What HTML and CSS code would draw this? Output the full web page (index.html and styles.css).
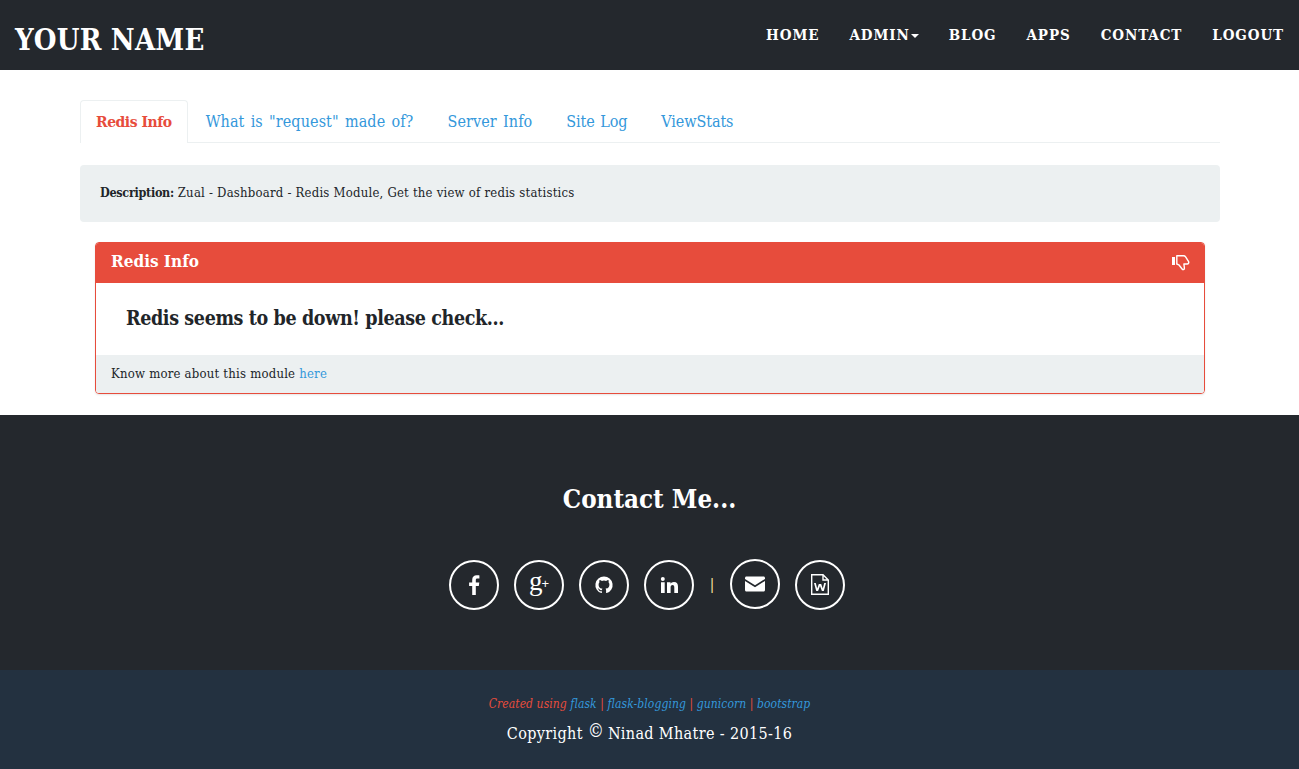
FILE: index.html
```html
<!DOCTYPE html>
<html lang="en">
<head>
    <meta charset="UTF-8">
    <title>Redis Info</title>
    <link rel="stylesheet" href="styles.css">
</head>
<body>

    <nav class="navbar">
        <a class="brand" href="#">YOUR NAME</a>
        <ul class="nav-links">
            <li><a href="#">HOME</a></li>
            <li><a href="#">ADMIN<span class="caret"></span></a></li>
            <li><a href="#">BLOG</a></li>
            <li><a href="#">APPS</a></li>
            <li><a href="#">CONTACT</a></li>
            <li><a href="#">LOGOUT</a></li>
        </ul>
    </nav>

    <main class="content">
        <ul class="tabs">
            <li class="tab active"><a href="#">Redis Info</a></li>
            <li class="tab"><a href="#">What is "request" made of?</a></li>
            <li class="tab"><a href="#">Server Info</a></li>
            <li class="tab short"><a href="#">Site Log</a></li>
            <li class="tab short"><a href="#">ViewStats</a></li>
        </ul>

        <div class="well"><strong>Description:</strong> Zual - Dashboard - Redis Module, Get the view of redis statistics</div>

        <div class="panel">
            <div class="panel-heading">
                <h3>Redis Info</h3>
                <svg class="thumb" viewBox="0 0 18 18" width="18" height="18">
                    <path d="M0 3h3v8H0z" fill="#fff"/>
                    <path d="M4.800 1.800h6.700c1 0 1.600.3 2.100 1l3 4.800c.5.900-.1 2.400-1.300 2.400h-3.400l.5 4.200c.1 1.300-1.500 1.900-2.300.8L6.800 10.800l-2-.8z" fill="none" stroke="#fff" stroke-width="1.400" stroke-linejoin="round"/>
                </svg>
            </div>
            <div class="panel-body">
                <h4>Redis seems to be down! please check...</h4>
            </div>
            <div class="panel-footer">Know more about this module <a href="#">here</a></div>
        </div>
    </main>

    <section class="contact">
        <h2>Contact Me...</h2>
        <div class="social">
            <a class="circle" href="#">
                <svg viewBox="0 0 24 24" width="24" height="24"><path d="M13.800 22v-9h3l.5-3.500h-3.500V7.300c0-1 .3-1.700 1.800-1.700h1.800V2.400c-.3 0-1.400-.1-2.700-.1-2.700 0-4.500 1.600-4.500 4.600v2.600H7.100V13h3.100v9z" fill="#fff"/></svg>
            </a>
            <a class="circle" href="#">
                <span class="gplus">g<span class="plus">+</span></span>
            </a>
            <a class="circle" href="#">
                <svg viewBox="0 0 24 24" width="24" height="24"><path d="M12 3.500a8.500 8.500 0 0 0-2.700 16.600c.4.100.6-.2.600-.4v-1.500c-2.400.5-2.900-1-2.900-1-.4-1-.9-1.300-.9-1.300-.8-.5.100-.5.100-.5.900.1 1.300.9 1.300.9.800 1.300 2 .9 2.400.7.100-.6.300-.9.600-1.200-1.900-.2-3.900-1-3.900-4.200 0-.9.300-1.700.9-2.300-.1-.2-.4-1.100.1-2.300 0 0 .7-.2 2.300.9a8 8 0 0 1 4.200 0c1.600-1.100 2.300-.9 2.300-.9.500 1.200.2 2.100.1 2.300.6.600.9 1.400.9 2.300 0 3.200-2 4-3.900 4.200.3.300.6.800.6 1.600v2.300c0 .2.200.5.600.4A8.500 8.500 0 0 0 12 3.500z" fill="#fff"/></svg>
            </a>
            <a class="circle" href="#">
                <svg viewBox="0 0 24 24" width="24" height="24"><path d="M4 9.200h3.700V20H4zM5.800 4a2 2 0 1 1 0 4 2 2 0 0 1 0-4zM10 9.200h3.500v1.500c.6-1 1.800-1.800 3.400-1.800 3 0 4.100 1.900 4.100 4.900V20h-3.700v-5.500c0-1.400-.4-2.400-1.700-2.400-1.500 0-2 1.100-2 2.500V20H10z" fill="#fff"/></svg>
            </a>
            <span class="divider">|</span>
            <a class="circle raised" href="#">
                <svg viewBox="0 0 24 24" width="24" height="24"><path d="M2 6c0-.9.600-1.500 1.500-1.500h17c.9 0 1.500.6 1.500 1.500v1l-10 6.200L2 7z" fill="#fff"/><path d="M2 9l10 6.200L22 9v9c0 .9-.6 1.500-1.500 1.500h-17C2.600 19.500 2 18.900 2 18z" fill="#fff"/></svg>
            </a>
            <a class="circle" href="#">
                <svg viewBox="0 0 24 24" width="24" height="24"><path d="M3.700 1.700h11.300l5.300 5.300v14.300H3.700zM15 1.700V7h5.300" fill="none" stroke="#fff" stroke-width="1.400"/><path d="M6 10h1.800l1.400 5.500L10.800 11h2.400l1.600 4.500L16.200 10H18l-2.200 8h-1.900L12 13l-1.900 5H8.200z" fill="#fff"/></svg>
            </a>
        </div>
    </section>

    <footer class="bottom">
        <p class="credits">Created using <a href="#">flask</a> | <a href="#">flask-blogging</a> | <a href="#">gunicorn</a> | <a href="#">bootstrap</a></p>
        <p class="copyright">Copyright <span class="copy-mark">&copy;</span> Ninad Mhatre - 2015-16</p>
    </footer>

</body>
</html>
```

FILE: styles.css
```css
body {
    margin: 0;
    font-family: "DejaVu Serif Condensed", "DejaVu Serif", serif;
    font-size: 13px;
    color: #212529;
    background-color: white;
}
a {
    text-decoration: none;
}
ul {
    list-style: none;
    margin: 0;
    padding: 0;
}
.navbar {
    height: 70px;
    background-color: #24282d;
    display: flex;
    justify-content: space-between;
    align-items: center;
    padding: 0 15px 0 15px;
}
.brand {
    color: white;
    font-size: 29px;
    font-weight: bold;
    letter-spacing: 0.2px;
    padding-top: 9px;
}
.nav-links {
    display: flex;
    gap: 30px;
}
.nav-links a {
    color: white;
    font-size: 15px;
    font-weight: bold;
    letter-spacing: 0.9px;
}
.caret {
    display: inline-block;
    margin-left: 1px;
    vertical-align: middle;
    border-top: 4px solid white;
    border-left: 4px solid transparent;
    border-right: 4px solid transparent;
}
.content {
    padding: 30px 79px 21px 80px;
}
.tabs {
    display: flex;
    border-bottom: 1px solid #ecf0f1;
    height: 42px;
    margin-bottom: 22px;
}
.tab a {
    display: block;
    height: 42px;
    line-height: 44px;
    padding: 0 16px;
    margin-right: 2px;
    font-size: 16px;
    letter-spacing: 0.1px;
    word-spacing: 1.5px;
    color: #3498db;
    box-sizing: border-box;
}
.tab.short a {
    letter-spacing: -0.1px;
    word-spacing: 1px;
}
.tab.active a {
    height: 43px;
    color: #e74c3c;
    font-size: 15.5px;
    font-weight: bold;
    letter-spacing: -0.45px;
    word-spacing: 0;
    background-color: white;
    border: 1px solid #ecf0f1;
    border-bottom: none;
    border-radius: 4px 4px 0 0;
    line-height: 42px;
    padding: 0 15px;
}
.well {
    background-color: #ecf0f1;
    border-radius: 4px;
    padding: 20px 20px 0;
    height: 57px;
    box-sizing: border-box;
    margin-bottom: 20px;
    letter-spacing: 0.22px;
}
.well strong {
    font-size: 12.5px;
    letter-spacing: -0.3px;
}
.panel {
    margin: 0 15px;
    border: 1px solid #e74c3c;
    border-radius: 4px;
    box-shadow: 0 1px 2px rgba(0, 0, 0, 0.1);
    overflow: hidden;
}
.panel-heading {
    height: 40px;
    background-color: #e74c3c;
    display: flex;
    justify-content: space-between;
    align-items: center;
    padding: 0 14px 0 15px;
}
.panel-heading h3 {
    margin: 0 0 4px;
    color: white;
    font-size: 17px;
    font-weight: bold;
}
.panel-body {
    height: 72px;
    display: flex;
    align-items: center;
    padding: 0 30px 2px;
    box-sizing: border-box;
}
.panel-body h4 {
    margin: 0;
    font-size: 19.5px;
    letter-spacing: -0.38px;
    font-weight: bold;
}
.panel-footer {
    height: 38px;
    line-height: 37px;
    background-color: #ecf0f1;
    padding: 0 15px;
    letter-spacing: 0.22px;
}
.panel-footer a {
    color: #3498db;
}
.contact {
    height: 255px;
    box-sizing: border-box;
    background-color: #24282d;
    padding-top: 67px;
    text-align: center;
}
.contact h2 {
    margin: 0 0 43px;
    color: white;
    font-size: 25.7px;
    line-height: 34px;
    font-weight: bold;
}
.social {
    display: flex;
    justify-content: center;
    align-items: center;
    gap: 15px;
    padding-right: 5px;
}
.circle {
    width: 50px;
    height: 50px;
    box-sizing: border-box;
    border: 2px solid white;
    border-radius: 50%;
    display: flex;
    justify-content: center;
    align-items: center;
}
.raised {
    margin-bottom: 2px;
}
.gplus {
    color: white;
    font-family: "Liberation Serif", serif;
    font-size: 27px;
    line-height: 28px;
    margin-top: -6px;
}
.plus {
    font-family: "Liberation Sans", sans-serif;
    font-size: 13px;
    vertical-align: 2px;
    margin-left: -1px;
}
.divider {
    color: #fde3a0;
    font-size: 15px;
    width: 6px;
    margin-bottom: 3px;
}
.bottom {
    height: 99px;
    box-sizing: border-box;
    background-color: #233140;
    padding-top: 25px;
    text-align: center;
}
.bottom p {
    margin: 0;
}
.credits {
    color: #e74c3c;
    font-size: 12px;
    font-style: italic;
    line-height: 18px;
    letter-spacing: 0.08px;
}
.credits a {
    color: #3498db;
}
.copyright {
    color: white;
    font-size: 16px;
    line-height: 22px;
    letter-spacing: 0.36px;
    padding-top: 10px;
}
.copy-mark {
    font-size: 18px;
    letter-spacing: -1px;
    line-height: 16px;
    vertical-align: 2px;
}
```
